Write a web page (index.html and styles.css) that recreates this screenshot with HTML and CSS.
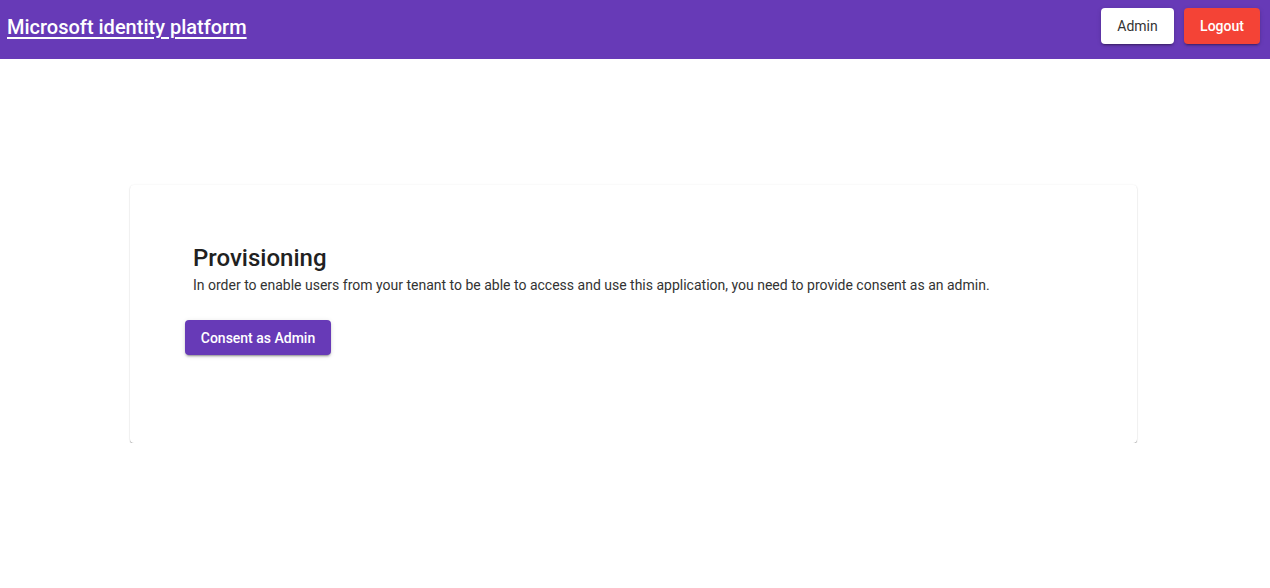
FILE: index.html
```html
<!DOCTYPE html>
<html>
<head>
<meta charset="utf-8">
<link rel="stylesheet" href="styles.css">
</head>
<body>
<header class="topbar">
  <a class="brand" href="#">Microsoft identity platform</a>
  <div class="actions">
    <button class="btn btn-light">Admin</button>
    <button class="btn btn-danger">Logout</button>
  </div>
</header>
<main class="page">
  <section class="card">
    <div class="card-text">
      <h2 class="title">Provisioning</h2>
      <p class="desc">In order to enable users from your tenant to be able to access and use this application, you need to provide consent as an admin.</p>
    </div>
    <button class="btn btn-primary">Consent as Admin</button>
  </section>
</main>
</body>
</html>
```
FILE: styles.css
```css
* { box-sizing: border-box; }
html, body { margin: 0; padding: 0; background: #fff; }
body { font-family: Roboto, "Liberation Sans", sans-serif; color: #212121; }

.topbar {
  height: 59px;
  background: #673ab7;
  display: flex;
  align-items: center;
  justify-content: space-between;
  padding: 0 10px 0 7px;
}
.brand {
  color: #fff;
  font-size: 20px;
  font-weight: 500;
  text-decoration: underline;
  text-underline-offset: 3px;
  margin-top: -5px;
}
.actions { display: flex; gap: 10px; margin-top: -8px; }

.btn {
  font-family: Roboto, "Liberation Sans", sans-serif;
  font-size: 14px;
  height: 36px;
  padding: 0;
  border: none;
  border-radius: 4px;
  cursor: pointer;
  white-space: nowrap;
  box-shadow: 0 3px 1px -2px rgba(0,0,0,0.2), 0 2px 2px rgba(0,0,0,0.14), 0 1px 5px rgba(0,0,0,0.12);
}
.btn-light { background: #fff; color: #333; font-weight: 400; width: 73px; }
.btn-danger { background: #f44336; color: #fff; font-weight: 500; width: 76px; }
.btn-primary { background: #673ab7; color: #fff; font-weight: 500; width: 146px; height: 35px; }

.page { padding-top: 126px; }
.card {
  width: 1007px;
  margin-left: 130px;
  height: 258px;
  background: #fff;
  border-radius: 4px;
  box-shadow: 0 1px 1px rgba(0,0,0,0.35), 0 0 2px rgba(0,0,0,0.08);
  padding: 59px 55px;
}
.card-text { padding-left: 8px; }
.title {
  margin: 0;
  font-size: 24px;
  font-weight: 500;
  line-height: 28px;
  color: #212121;
}
.desc {
  margin: 4px 0 26px;
  font-size: 14px;
  line-height: 18px;
  color: #333;
}
```
